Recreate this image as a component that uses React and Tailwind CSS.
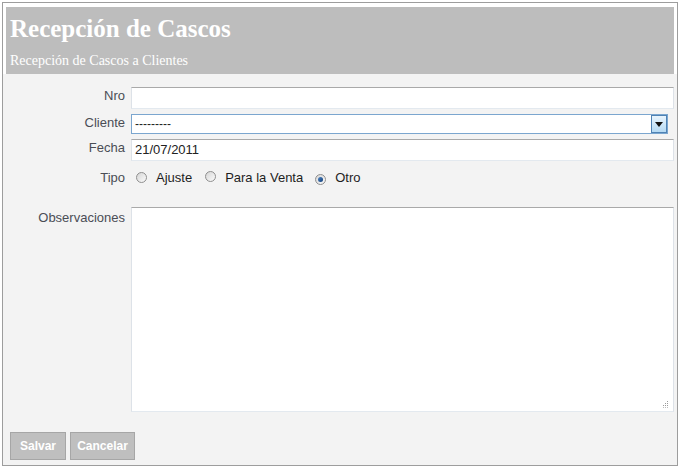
import React from "react";

const inputBorder =
  "border border-t-[#a9a9a9] border-l-[#dde2e8] border-r-[#dde2e8] border-b-[#e3e9ef] bg-white";

const Radio = ({ checked }) => (
  <span className="relative inline-flex h-[11px] w-[11px] shrink-0 items-center justify-center rounded-full border border-[#8f8f8f] bg-gradient-to-br from-[#d6d6d6] to-[#fbfbfb]">
    {checked && (
      <span className="h-[5px] w-[5px] rounded-full bg-gradient-to-br from-[#4f86c4] to-[#0f3d78]" />
    )}
  </span>
);

const Label = ({ children }) => (
  <div className="w-[122px] shrink-0 pt-[1px] text-right text-[13px] leading-[16px] text-[#4a4d55]">
    {children}
  </div>
);

const App = () => {
  return (
    <div
      className="h-[468px] w-[681px] bg-white pt-[2px] pl-[2px]"
      style={{ fontFamily: '"Liberation Sans", Arial, sans-serif' }}
    >
      <div className="flex h-[464px] w-[676px] flex-col border border-[#9d9d9d] bg-[#f3f3f3]">
        {/* Header */}
        <div className="bg-white px-[3px] pt-[4px]">
          <div className="h-[67px] bg-[#bdbdbd] pl-[4px] pt-[9px]" style={{ fontFamily: '"Liberation Serif", "Times New Roman", serif' }}>
            <h1 className="text-[25px] font-bold leading-[25px] text-white">Recepción de Cascos</h1>
            <p className="mt-[13px] text-[14px] leading-[14px] text-white">Recepción de Cascos a Clientes</p>
          </div>
        </div>

        {/* Form */}
        <div className="flex flex-col pt-[13px] pr-[3px]">
          <div className="flex items-start gap-[6px]">
            <Label>Nro</Label>
            <div className={`h-[22px] flex-1 ${inputBorder}`} />
          </div>

          <div className="mt-[5px] flex items-start gap-[6px]">
            <Label>Cliente</Label>
            <div className="mr-[6px] flex h-[20px] flex-1 items-center border border-[#7ba6cf] bg-white">
              <span className="flex-1 pl-[3px] text-[12px] leading-[16px] text-[#222]">---------</span>
              <span className="flex h-[18px] w-[16px] items-center justify-center border border-[#4f82b4] bg-gradient-to-b from-[#e8f4fd] to-[#b4d9f3]">
                <svg width="8" height="5" viewBox="0 0 8 5">
                  <path d="M0 0h8L4 5z" fill="#111" />
                </svg>
              </span>
            </div>
          </div>

          <div className="mt-[5px] flex items-start gap-[6px]">
            <Label>Fecha</Label>
            <div className={`flex h-[22px] flex-1 items-center pl-[3px] text-[13px] text-[#222] ${inputBorder}`}>
              21/07/2011
            </div>
          </div>

          <div className="mt-[8px] flex items-center gap-[6px]">
            <Label>Tipo</Label>
            <div className="flex items-center pl-[5px] text-[13px] leading-[16px] text-[#1e1e1e]">
              <Radio />
              <span className="ml-[9px]">Ajuste</span>
              <span className="ml-[13px]">
                <Radio />
              </span>
              <span className="ml-[9px]">Para la Venta</span>
              <span className="ml-[12px]">
                <Radio checked />
              </span>
              <span className="ml-[9px]">Otro</span>
            </div>
          </div>

          <div className="mt-[21px] flex items-start gap-[6px]">
            <div className="w-[122px] shrink-0 pt-[3px] text-right text-[13px] leading-[16px] text-[#4a4d55]">
              Observaciones
            </div>
            <div className={`relative h-[205px] flex-1 ${inputBorder}`}>
              <svg className="absolute bottom-[3px] right-[4px]" width="7" height="7" viewBox="0 0 7 7">
                <rect x="5" y="0" width="1" height="1" fill="#9a9a9a" />
                <rect x="3" y="2" width="1" height="1" fill="#9a9a9a" />
                <rect x="5" y="2" width="1" height="1" fill="#9a9a9a" />
                <rect x="1" y="4" width="1" height="1" fill="#9a9a9a" />
                <rect x="3" y="4" width="1" height="1" fill="#9a9a9a" />
                <rect x="5" y="4" width="1" height="1" fill="#9a9a9a" />
                <rect x="1" y="6" width="1" height="1" fill="#bdbdbd" />
                <rect x="3" y="6" width="1" height="1" fill="#bdbdbd" />
                <rect x="5" y="6" width="1" height="1" fill="#bdbdbd" />
              </svg>
            </div>
          </div>

          <div className="mt-[20px] flex gap-[4px] pl-[7px]">
            <button className="h-[28px] w-[56px] border border-[#a6a6a6] bg-[#bfbfbf] text-[12px] font-bold text-white">
              Salvar
            </button>
            <button className="h-[28px] w-[65px] border border-[#a6a6a6] bg-[#bfbfbf] text-[12px] font-bold text-white">
              Cancelar
            </button>
          </div>
        </div>
      </div>
    </div>
  );
};

export default App;
